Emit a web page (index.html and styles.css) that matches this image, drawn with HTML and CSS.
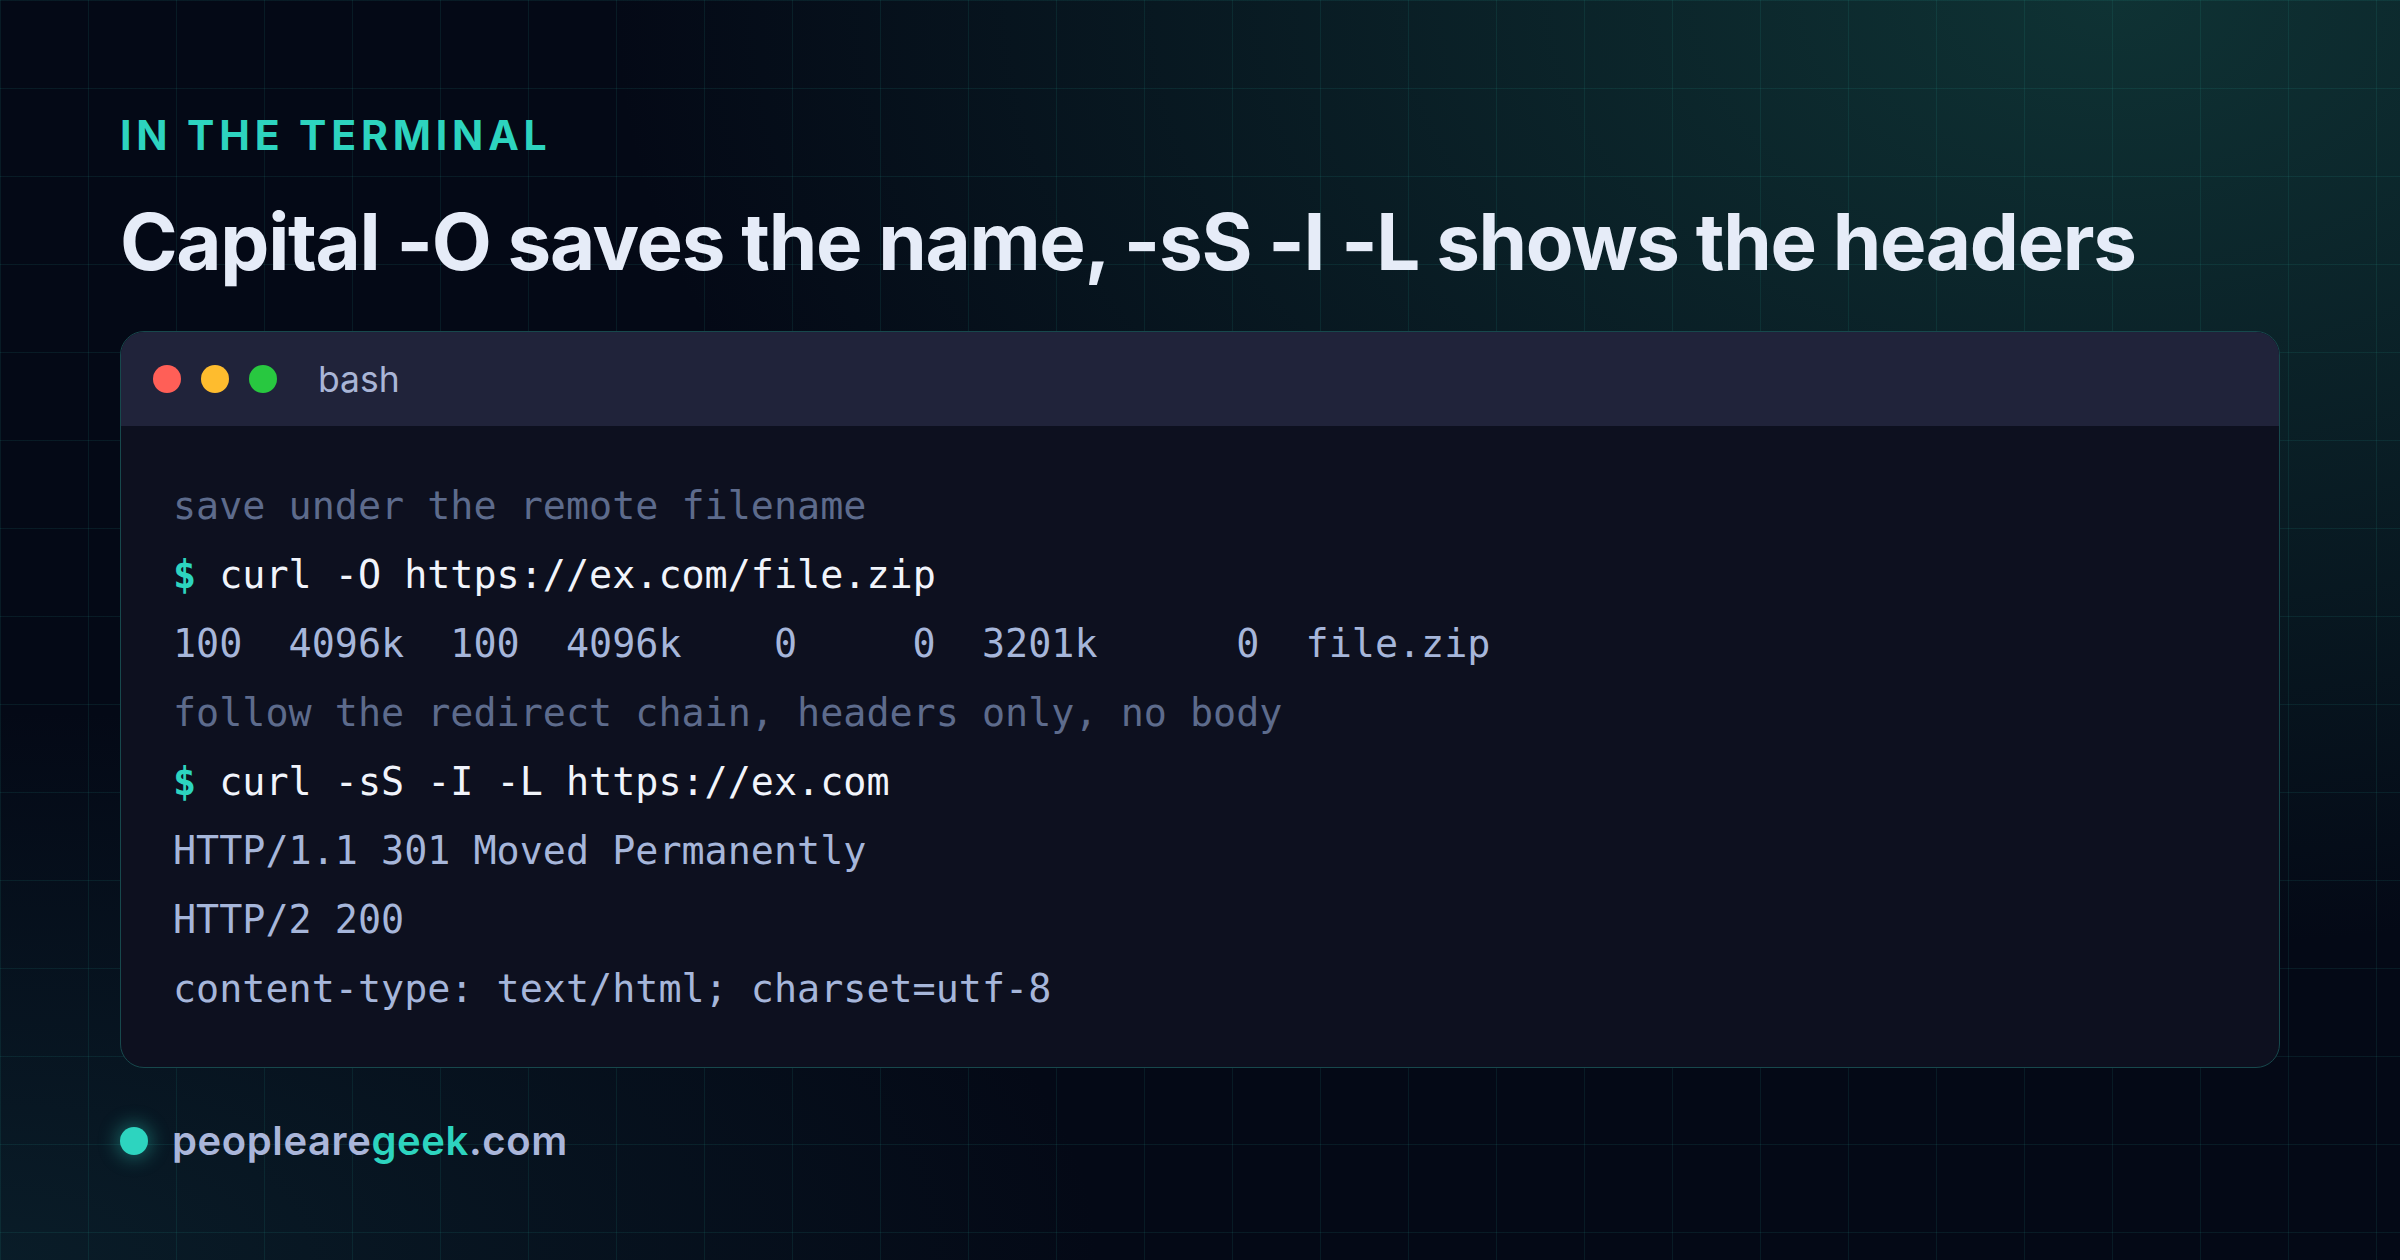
FILE: index.html
```html
<!DOCTYPE html>
<html lang="en">
<head>
<meta charset="utf-8">
<title>In the terminal</title>
<link rel="stylesheet" href="styles.css">
</head>
<body>
<main class="page">
  <p class="eyebrow">IN THE TERMINAL</p>
  <h1 class="title">Capital -O saves the name, -sS -I -L shows the headers</h1>
  <section class="term">
    <div class="term-bar">
      <span class="light light-red"></span>
      <span class="light light-yellow"></span>
      <span class="light light-green"></span>
      <span class="term-name">bash</span>
    </div>
    <div class="term-body">
      <div class="line comment">save under the remote filename</div>
      <div class="line cmd"><span class="prompt">$</span> curl -O https://ex.com/file.zip</div>
      <div class="line out">100  4096k  100  4096k    0     0  3201k      0  file.zip</div>
      <div class="line comment">follow the redirect chain, headers only, no body</div>
      <div class="line cmd"><span class="prompt">$</span> curl -sS -I -L https://ex.com</div>
      <div class="line out">HTTP/1.1 301 Moved Permanently</div>
      <div class="line out">HTTP/2 200</div>
      <div class="line out">content-type: text/html; charset=utf-8</div>
    </div>
  </section>
  <footer class="brand">
    <span class="brand-dot"></span>
    <span class="brand-name">peopleare<span class="brand-accent">geek</span>.com</span>
  </footer>
</main>
</body>
</html>
```

FILE: styles.css
```css
html, body {
  margin: 0;
  padding: 0;
}

body {
  width: 2400px;
  height: 1260px;
  overflow: hidden;
  font-family: Inter, "Liberation Sans", sans-serif;
  background-color: #040916;
  background-image:
    linear-gradient(rgba(45, 212, 191, 0.09) 1px, transparent 1px),
    linear-gradient(90deg, rgba(45, 212, 191, 0.09) 1px, transparent 1px),
    radial-gradient(ellipse 1500px 950px at 88% 0%, rgba(22, 78, 72, 0.6), transparent 100%),
    radial-gradient(ellipse 1100px 550px at 0% 100%, rgba(16, 52, 62, 0.45), transparent 100%);
  background-size: 88px 88px, 88px 88px, 100% 100%, 100% 100%;
  background-repeat: repeat, repeat, no-repeat, no-repeat;
}

.page {
  display: flex;
  flex-direction: column;
  padding: 115px 120px 0 120px;
}

.eyebrow {
  margin: 0;
  font-size: 41px;
  line-height: 41px;
  font-weight: 700;
  letter-spacing: 0.118em;
  color: #2dd4bf;
}

.title {
  margin: 43px 0 0 0;
  font-size: 78px;
  line-height: 86px;
  font-weight: 700;
  letter-spacing: -0.017em;
  color: #e6ecf8;
}

.term {
  margin-top: 46px;
  border: 1px solid #17484c;
  border-radius: 24px;
  overflow: hidden;
  background: #0d101f;
}

.term-bar {
  height: 94px;
  display: flex;
  align-items: center;
  gap: 20px;
  padding: 0 32px;
  background: #20233a;
}

.light {
  width: 28px;
  height: 28px;
  border-radius: 50%;
}

.light-red { background: #ff5f57; }
.light-yellow { background: #febc2e; }
.light-green { background: #28c840; }

.term-name {
  margin-left: 21px;
  font-size: 35.5px;
  color: #a9b5d6;
}

.term-body {
  padding: 45px 52px 44px 52px;
  font-family: "DejaVu Sans Mono", monospace;
  font-size: 38.4px;
  line-height: 69px;
}

.line {
  white-space: pre;
}

.comment { color: #5d6b8c; }
.cmd { color: #f1f4fb; }
.prompt { color: #2dd4bf; font-weight: 700; }
.out { color: #a6b6da; }

.brand {
  margin-top: 50px;
  display: flex;
  align-items: center;
  gap: 24px;
}

.brand-dot {
  width: 28px;
  height: 28px;
  border-radius: 50%;
  background: #2dd4bf;
  box-shadow: 0 0 18px 4px rgba(45, 212, 191, 0.35);
}

.brand-name {
  font-size: 40px;
  line-height: 46px;
  font-weight: 600;
  letter-spacing: 0.015em;
  color: #aab6da;
}

.brand-accent {
  color: #2dd4bf;
}
```
